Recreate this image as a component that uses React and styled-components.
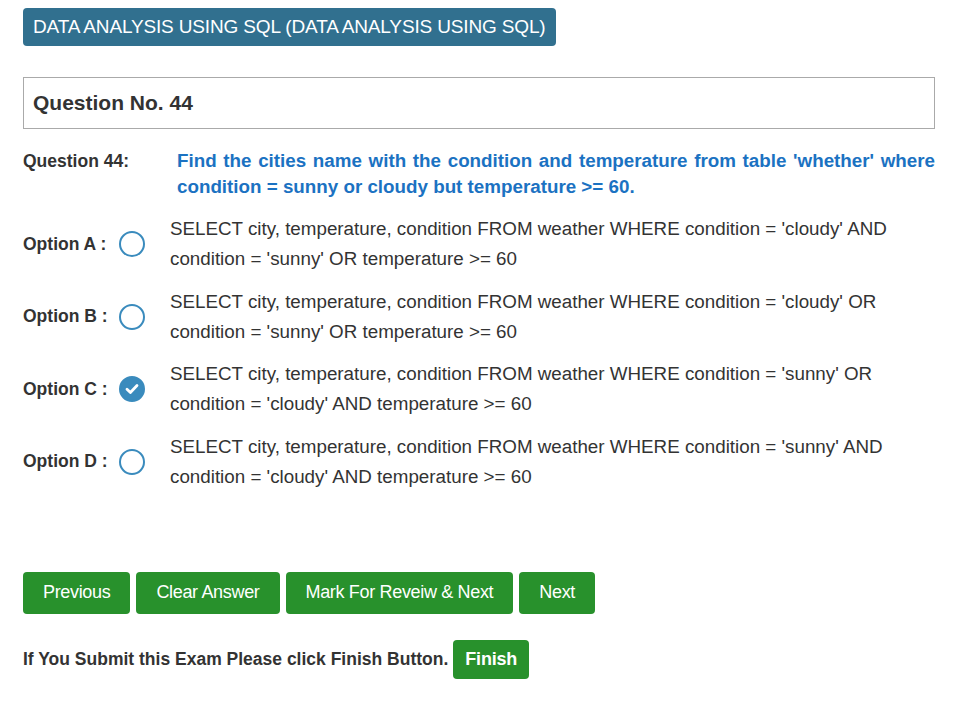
import styled, { createGlobalStyle } from "styled-components";

const GlobalStyle = createGlobalStyle`
  body {
    margin: 0;
    background: #fff;
    font-family: "Liberation Sans", Arial, sans-serif;
    color: #333;
  }
`;

const Page = styled.div`
  padding: 8px 18px 20px 23px;
  display: flex;
  flex-direction: column;
  align-items: stretch;
`;

const CourseBadge = styled.div`
  align-self: flex-start;
  background: #31708f;
  color: #fff;
  border-radius: 4px;
  height: 38px;
  padding: 0 10px;
  display: flex;
  align-items: center;
  font-size: 19px;
  letter-spacing: -0.15px;
`;

const QuestionBox = styled.div`
  margin-top: 31px;
  border: 1px solid #aaa;
  height: 50px;
  display: flex;
  align-items: center;
  padding: 0 9px;
  font-size: 21px;
  font-weight: bold;
  color: #333;
`;

const QuestionRow = styled.div`
  margin-top: 19px;
  display: flex;
`;

const QuestionLabel = styled.div`
  width: 154px;
  flex-shrink: 0;
  font-size: 17.5px;
  font-weight: bold;
  line-height: 26px;
`;

const QuestionText = styled.div`
  flex: 1;
  font-size: 18.8px;
  font-weight: bold;
  line-height: 26px;
  color: #1b72c2;
  text-align: justify;
`;

const Options = styled.div`
  margin-top: 14px;
  display: flex;
  flex-direction: column;
  gap: 12.5px;
`;

const OptionRow = styled.div`
  display: flex;
  align-items: center;
`;

const OptionLabel = styled.div`
  width: 96px;
  flex-shrink: 0;
  font-size: 17.5px;
  font-weight: bold;
`;

const Radio = styled.span`
  width: 26px;
  height: 26px;
  flex-shrink: 0;
  box-sizing: border-box;
  border-radius: 50%;
  border: 2px solid #3a8bbd;
  background: ${(p) => (p.checked ? "#3a8bbd" : "#fff")};
  display: flex;
  align-items: center;
  justify-content: center;
  margin-right: 25px;
`;

const OptionText = styled.div`
  flex: 1;
  font-size: 18.8px;
  line-height: 30px;
  color: #333;
`;

const ButtonBar = styled.div`
  margin-top: 80px;
  display: flex;
  gap: 6px;
`;

const GreenButton = styled.button`
  background: #28912c;
  color: #fff;
  border: none;
  border-radius: 4px;
  height: ${(p) => (p.small ? "39px" : "42px")};
  padding: 0 ${(p) => (p.small ? "12px" : "20px")};
  font-family: "Liberation Sans", Arial, sans-serif;
  font-size: 18px;
  font-weight: ${(p) => (p.small ? "bold" : "normal")};
  letter-spacing: ${(p) => (p.small ? "-0.2px" : "-0.33px")};
  cursor: pointer;
`;

const FinishRow = styled.div`
  margin-top: 26px;
  display: flex;
  align-items: center;
  gap: 5px;
`;

const FinishNote = styled.span`
  font-size: 17.5px;
  font-weight: bold;
  color: #333;
`;

const options = [
  {
    key: "A",
    text: "SELECT city, temperature, condition FROM weather WHERE condition = 'cloudy' AND condition = 'sunny' OR temperature >= 60",
  },
  {
    key: "B",
    text: "SELECT city, temperature, condition FROM weather WHERE condition = 'cloudy' OR condition = 'sunny' OR temperature >= 60",
  },
  {
    key: "C",
    text: "SELECT city, temperature, condition FROM weather WHERE condition = 'sunny' OR condition = 'cloudy' AND temperature >= 60",
  },
  {
    key: "D",
    text: "SELECT city, temperature, condition FROM weather WHERE condition = 'sunny' AND condition = 'cloudy' AND temperature >= 60",
  },
];

function Check() {
  return (
    <svg width="14" height="12" viewBox="0 0 14 12">
      <path
        d="M2 6.2 L5.4 9.4 L12 2.6"
        fill="none"
        stroke="#fff"
        strokeWidth="2.8"
        strokeLinecap="round"
        strokeLinejoin="round"
      />
    </svg>
  );
}

function App() {
  const selected = "C";

  return (
    <Page>
      <GlobalStyle />
      <CourseBadge>DATA ANALYSIS USING SQL (DATA ANALYSIS USING SQL)</CourseBadge>
      <QuestionBox>Question No. 44</QuestionBox>
      <QuestionRow>
        <QuestionLabel>Question 44:</QuestionLabel>
        <QuestionText>
          Find the cities name with the condition and temperature from table
          'whether' where condition = sunny or cloudy but temperature &gt;= 60.
        </QuestionText>
      </QuestionRow>
      <Options>
        {options.map((o) => (
          <OptionRow key={o.key}>
            <OptionLabel>Option {o.key} :</OptionLabel>
            <Radio checked={o.key === selected}>
              {o.key === selected && <Check />}
            </Radio>
            <OptionText>{o.text}</OptionText>
          </OptionRow>
        ))}
      </Options>
      <ButtonBar>
        <GreenButton>Previous</GreenButton>
        <GreenButton>Clear Answer</GreenButton>
        <GreenButton>Mark For Reveiw &amp; Next</GreenButton>
        <GreenButton>Next</GreenButton>
      </ButtonBar>
      <FinishRow>
        <FinishNote>If You Submit this Exam Please click Finish Button.</FinishNote>
        <GreenButton small>Finish</GreenButton>
      </FinishRow>
    </Page>
  );
}

export default App;
